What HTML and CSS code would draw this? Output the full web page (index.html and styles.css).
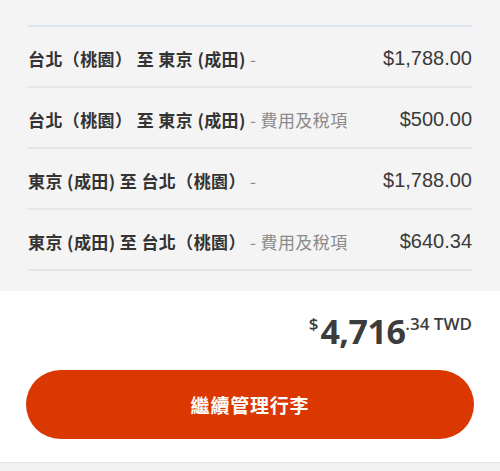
FILE: index.html
```html
<!DOCTYPE html>
<html lang="zh-Hant">
<head>
<meta charset="utf-8">
<link rel="stylesheet" href="styles.css">
</head>
<body>
<div class="panel">
  <ul class="items">
    <li class="item">
      <span class="route"><b>台北（桃園） 至 東京 (成田)</b><span class="sub"> -</span></span>
      <span class="price">$1,788.00</span>
    </li>
    <li class="item">
      <span class="route"><b>台北（桃園） 至 東京 (成田)</b><span class="sub"> - 費用及稅項</span></span>
      <span class="price">$500.00</span>
    </li>
    <li class="item">
      <span class="route"><b>東京 (成田) 至 台北（桃園）</b><span class="sub"> -</span></span>
      <span class="price">$1,788.00</span>
    </li>
    <li class="item">
      <span class="route"><b>東京 (成田) 至 台北（桃園）</b><span class="sub"> - 費用及稅項</span></span>
      <span class="price">$640.34</span>
    </li>
  </ul>
</div>
<div class="summary">
  <div class="total">
    <span class="cur">$</span><span class="big">4,716</span><span class="small">.34 TWD</span>
  </div>
  <button class="cta">繼續管理行李</button>
</div>
<div class="footer"></div>
</body>
</html>
```
FILE: styles.css
```css
html, body {
  margin: 0;
  padding: 0;
  background: #ffffff;
}
body {
  font-family: "Noto Sans CJK TC", "Noto Sans", sans-serif;
  color: #333333;
  width: 500px;
  height: 471px;
  overflow: hidden;
}
.panel {
  background: #f4f4f4;
  padding: 25px 28px 20px;
  height: 291px;
  box-sizing: border-box;
}
.items {
  list-style: none;
  margin: 0;
  padding: 0;
  border-top: 2px solid #d8e4ef;
}
.item {
  height: 59px;
  border-bottom: 2px solid #e1e7ea;
  display: flex;
  align-items: center;
  justify-content: space-between;
}
.route {
  font-size: 17px;
  letter-spacing: 0.4px;
  white-space: nowrap;
  position: relative;
  top: 2px;
}
.route b {
  font-weight: 700;
  color: #333333;
}
.sub {
  color: #8a8a8a;
  font-weight: 400;
}
.price {
  font-family: "Liberation Sans", Arial, sans-serif;
  font-size: 20px;
  color: #3a3a3a;
  position: relative;
  top: 2px;
}
.summary {
  padding: 0 26px;
  height: 171px;
  box-sizing: border-box;
  display: flex;
  flex-direction: column;
}
.total {
  display: flex;
  justify-content: flex-end;
  align-items: flex-start;
  padding: 22px 2px 0 0;
  height: 57px;
  box-sizing: border-box;
  font-family: "Open Sans", sans-serif;
  color: #3c3c3c;
  line-height: 1;
}
.cur {
  font-size: 17px;
  font-weight: 600;
  margin-top: 2px;
  margin-right: 2px;
}
.big {
  font-size: 34px;
  font-weight: 700;
  letter-spacing: -0.5px;
  margin-top: 1px;
}
.small {
  font-size: 17px;
  font-weight: 600;
  margin-top: 2px;
}
.cta {
  margin-top: 22px;
  height: 69px;
  width: 448px;
  border: none;
  border-radius: 35px;
  background: #da3800;
  color: #ffffff;
  font-family: "Noto Sans CJK TC", sans-serif;
  font-size: 19px;
  font-weight: 700;
  letter-spacing: 0.8px;
}
.footer {
  height: 9px;
  background: #f1f1f1;
  border-top: 1px solid #e4e4e4;
}
```
